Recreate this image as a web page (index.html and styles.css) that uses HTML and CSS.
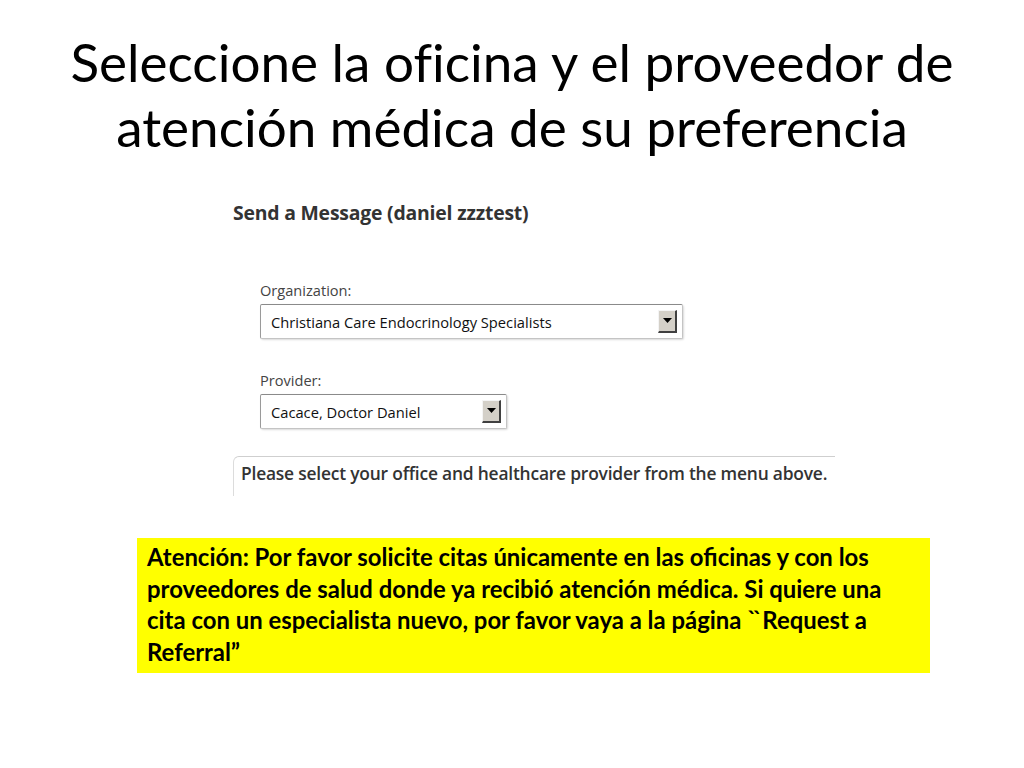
FILE: index.html
```html
<!DOCTYPE html>
<html lang="es">
<head>
<meta charset="utf-8">
<title>Seleccione la oficina</title>
<link rel="stylesheet" href="styles.css">
</head>
<body>
<div class="slide">
  <h1 class="title">Seleccione la oficina y el proveedor de<br>atención médica de su preferencia</h1>
  <div class="shot">
    <div class="shot-head">Send a Message (daniel zzztest)</div>
    <div class="field field-org">
      <div class="label">Organization:</div>
      <div class="select select-org">
        <span class="select-text">Christiana Care Endocrinology Specialists</span>
        <span class="arrow"><svg width="9" height="6" viewBox="0 0 9 6"><polygon points="0,0 9,0 4.5,5" fill="#000"/></svg></span>
      </div>
    </div>
    <div class="field field-prov">
      <div class="label">Provider:</div>
      <div class="select select-prov">
        <span class="select-text">Cacace, Doctor Daniel</span>
        <span class="arrow"><svg width="9" height="6" viewBox="0 0 9 6"><polygon points="0,0 9,0 4.5,5" fill="#000"/></svg></span>
      </div>
    </div>
    <div class="msg">Please select your office and healthcare provider from the menu above.</div>
  </div>
  <div class="note">Atención: Por favor solicite citas únicamente en las oficinas y con los<br>proveedores de salud donde ya recibió atención médica. Si quiere una<br>cita con un especialista nuevo, por favor vaya a la página <span class="dq">``</span>Request a<br>Referral”</div>
</div>
</body>
</html>
```
FILE: styles.css
```css
html, body {
  margin: 0;
  padding: 0;
  background: #ffffff;
}
.slide {
  width: 1024px;
  height: 768px;
  overflow: hidden;
  display: flex;
  flex-direction: column;
}
.title {
  margin: 29px 0 0 0;
  font-family: Lato, "Liberation Sans", sans-serif;
  font-weight: 400;
  font-size: 53px;
  line-height: 65px;
  text-align: center;
  color: #000;
  font-variant-ligatures: none;
}
.shot {
  margin: 42px 0 0 233px;
  display: flex;
  flex-direction: column;
  font-family: "Open Sans", "Noto Sans", sans-serif;
}
.shot-head {
  font-weight: 700;
  font-size: 19.4px;
  line-height: 24px;
  color: #333;
  letter-spacing: -0.2px;
}
.field {
  margin-left: 27px;
  display: flex;
  flex-direction: column;
}
.field-org { margin-top: 56px; }
.field-prov { margin-top: 32px; }
.label {
  font-size: 14.6px;
  line-height: 18px;
  color: #444;
}
.select {
  margin-top: 5px;
  height: 35px;
  box-sizing: border-box;
  border: 1px solid #8a8a8a;
  border-right-color: #c4c4c4;
  border-bottom-color: #c4c4c4;
  border-left-color: #9a9a9a;
  border-radius: 2px;
  box-shadow: 1px 1px 2px rgba(0,0,0,0.15);
  display: flex;
  align-items: center;
  justify-content: space-between;
  padding: 0 5px 0 10px;
  background: #fff;
}
.select-org { width: 423px; }
.select-prov { width: 247px; }
.select-text {
  font-size: 14.7px;
  color: #111;
}
.arrow {
  width: 19px;
  height: 23px;
  box-sizing: border-box;
  background: #d4d0c8;
  border-top: 1px solid #f4f4f4;
  border-left: 1px solid #f4f4f4;
  border-right: 2px solid #404040;
  border-bottom: 2px solid #404040;
  display: flex;
  align-items: center;
  justify-content: center;
}
.msg {
  margin-top: 27px;
  width: 602px;
  height: 40px;
  box-sizing: border-box;
  border-top: 1px solid #cfcfcf;
  border-left: 1px solid #dcdcdc;
  border-top-left-radius: 6px;
  padding: 4px 0 0 7px;
  font-weight: 600;
  font-size: 17.4px;
  line-height: 24px;
  color: #333;
  letter-spacing: -0.2px;
  white-space: nowrap;
}
.note {
  margin: 42px 0 0 137px;
  width: 793px;
  height: 135px;
  box-sizing: border-box;
  background: #ffff00;
  padding: 3px 0 0 10px;
  font-family: Lato, "Liberation Sans", sans-serif;
  font-weight: 700;
  font-size: 23.9px;
  line-height: 31.6px;
  color: #000;
  white-space: nowrap;
}
.dq {
  letter-spacing: -4px;
  margin-right: 4px;
}
```
